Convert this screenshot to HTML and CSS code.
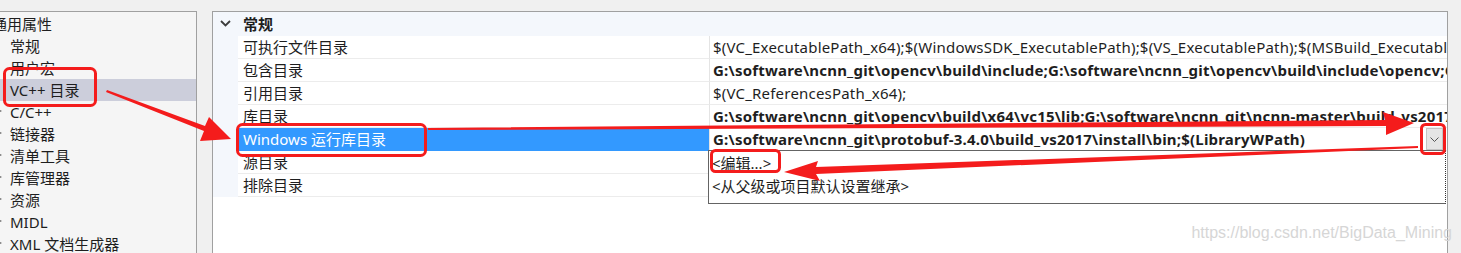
FILE: index.html
```html
<!DOCTYPE html>
<html>
<head>
    <title>VC++ 目录</title>
    <link rel="stylesheet" href="styles.css">
</head>
<body>
    <div class="screen">
        <div class="tree">
            <div class="node root">通用属性</div>
            <div class="node">常规</div>
            <div class="node">用户宏</div>
            <div class="node selected">VC++ 目录</div>
            <div class="node folder"><span class="twisty"></span>C/C++</div>
            <div class="node folder"><span class="twisty"></span>链接器</div>
            <div class="node folder"><span class="twisty"></span>清单工具</div>
            <div class="node folder"><span class="twisty"></span>库管理器</div>
            <div class="node folder"><span class="twisty"></span>资源</div>
            <div class="node folder"><span class="twisty"></span>MIDL</div>
            <div class="node folder"><span class="twisty"></span>XML 文档生成器</div>
        </div>

        <div class="grid">
            <div class="category">
                <svg class="chevron" width="11" height="7" viewBox="0 0 11 7">
                    <path d="M1 1 L5.5 5.5 L10 1" fill="none" stroke="#3c3c3c" stroke-width="1.8"/>
                </svg>
                常规
            </div>
            <div class="prop">
                <div class="name">可执行文件目录</div>
                <div class="value">$(VC_ExecutablePath_x64);$(WindowsSDK_ExecutablePath);$(VS_ExecutablePath);$(MSBuild_ExecutablePath);$(FxCopDir);$(PATH);</div>
            </div>
            <div class="prop">
                <div class="name">包含目录</div>
                <div class="value bold">G:\software\ncnn_git\opencv\build\include;G:\software\ncnn_git\opencv\build\include\opencv;G:\software\ncnn_git\opencv\build\include\opencv2;</div>
            </div>
            <div class="prop">
                <div class="name">引用目录</div>
                <div class="value">$(VC_ReferencesPath_x64);</div>
            </div>
            <div class="prop">
                <div class="name">库目录</div>
                <div class="value bold">G:\software\ncnn_git\opencv\build\x64\vc15\lib;G:\software\ncnn_git\ncnn-master\build_vs2017\install\lib;</div>
            </div>
            <div class="prop active">
                <div class="name">Windows 运行库目录</div>
                <div class="value bold">
                    <span class="text">G:\software\ncnn_git\protobuf-3.4.0\build_vs2017\install\bin;$(LibraryWPath)</span>
                    <span class="drop-btn">
                        <svg width="9" height="5" viewBox="0 0 9 5">
                            <path d="M0.5 0.5 L4.5 4.5 L8.5 0.5" fill="none" stroke="#555" stroke-width="1"/>
                        </svg>
                    </span>
                </div>
            </div>
            <div class="prop">
                <div class="name">源目录</div>
                <div class="value"></div>
            </div>
            <div class="prop">
                <div class="name">排除目录</div>
                <div class="value"></div>
            </div>
        </div>

        <div class="drop-list">
            <div class="item">&lt;编辑...&gt;</div>
            <div class="item">&lt;从父级或项目默认设置继承&gt;</div>
        </div>

        <!-- red annotations drawn over the screenshot -->
        <svg class="marks" width="1461" height="253" viewBox="0 0 1461 253">
            <g fill="none" stroke="#f41c1c" stroke-width="3">
                <rect x="4.5" y="68.5" width="91" height="37" rx="5"/>
                <rect x="237.5" y="124.5" width="188" height="31" rx="5"/>
                <rect x="1421.5" y="124.5" width="23" height="29" rx="4"/>
                <rect x="711.5" y="150.5" width="68" height="21" rx="4"/>
            </g>
            <g fill="#f41c1c">
                <polygon points="107,90 205,126 209,117 231,139 200,141 204,131 106,92"/>
                <polygon points="428,128 1385,120 1383,112 1414,123 1386,135 1386,126 428,130"/>
                <polygon points="1418,146 816,167 818,161 784,172 820,181 816,174 1418,148"/>
            </g>
        </svg>

        <div class="watermark">https://blog.csdn.net/BigData_Mining</div>
    </div>
</body>
</html>
```

FILE: styles.css
```css
body {
    margin: 0;
    background: #f0f0f0;
    font-family: "Noto Sans", "Noto Sans CJK SC", sans-serif;
    font-size: 15px;
    color: #1e1e1e;
}

.screen {
    position: relative;
    width: 1461px;
    height: 253px;
    overflow: hidden;
    display: flex;
    align-items: flex-start;
    padding-top: 11px;
    box-sizing: border-box;
}

/* left tree */
.tree {
    width: 197px;
    height: 260px;
    box-sizing: border-box;
    padding-top: 1px;
    background: #f5f5f5;
    border-top: 1px solid #a0a0a0;
    border-right: 1px solid #a0a0a0;
    overflow: hidden;
}

.node {
    height: 22px;
    box-sizing: border-box;
    padding-bottom: 1px;
    display: flex;
    align-items: center;
    padding-left: 10px;
    white-space: nowrap;
    position: relative;
}

.node.root {
    padding-left: 0;
    margin-left: -8px;
}

.node.selected {
    background: #cccedb;
}

.twisty {
    position: absolute;
    left: -2px;
    top: 8px;
    width: 0;
    height: 0;
    border-top: 2.5px solid transparent;
    border-bottom: 2.5px solid transparent;
    border-left: 4px solid #6a6a6a;
}

/* property grid */
.grid {
    width: 1236px;
    height: 260px;
    margin-left: 15px;
    box-sizing: border-box;
    background: #fff;
    border: 1px solid #a0a0a0;
    border-bottom: none;
}

.category {
    height: 24px;
    box-sizing: border-box;
    padding-bottom: 2px;
    display: flex;
    align-items: center;
    background: #f4f7fc;
    font-weight: bold;
}

.chevron {
    margin-left: 7px;
    margin-right: 12px;
    margin-top: 1px;
}

.prop {
    display: flex;
    height: 23px;
    padding-left: 25px;
    background: #f4f7fc;
}

.name,
.value {
    display: flex;
    align-items: center;
    box-sizing: border-box;
    padding-bottom: 1px;
    background: #fff;
    border-bottom: 1px solid #ececec;
    white-space: nowrap;
    overflow: hidden;
}

.name {
    width: 471px;
    flex: none;
    padding-left: 5px;
}

.value {
    flex: 1;
    min-width: 0;
    padding-left: 3px;
    border-left: 1px solid #e4e4e4;
    letter-spacing: 0.2px;
}

.value.bold {
    font-weight: bold;
}

.prop.active .name {
    background: #3399ff;
    color: #fff;
    border-bottom-color: #3399ff;
}

.value .text {
    flex: 1;
    min-width: 0;
    overflow: hidden;
}

.drop-btn {
    flex: none;
    width: 17px;
    height: 22px;
    margin-right: 4px;
    margin-top: 1px;
    box-sizing: border-box;
    background: #e5e5e5;
    border: 1px solid #c4c4c4;
    display: flex;
    align-items: center;
    justify-content: center;
}

/* opened dropdown */
.drop-list {
    position: absolute;
    left: 708px;
    top: 150px;
    width: 738px;
    height: 54px;
    box-sizing: border-box;
    background: #fff;
    border: 1px solid #646464;
    border-right: 1px dotted #333;
    padding-left: 3px;
}

.drop-list .item {
    height: 23px;
    box-sizing: border-box;
    padding-bottom: 1px;
    display: flex;
    align-items: center;
    white-space: nowrap;
}

.marks {
    position: absolute;
    left: 0;
    top: 0;
    pointer-events: none;
}

.watermark {
    position: absolute;
    right: 9px;
    top: 224px;
    font-family: "Liberation Sans", Arial, sans-serif;
    font-size: 16px;
    color: #d6d6d6;
}
```
